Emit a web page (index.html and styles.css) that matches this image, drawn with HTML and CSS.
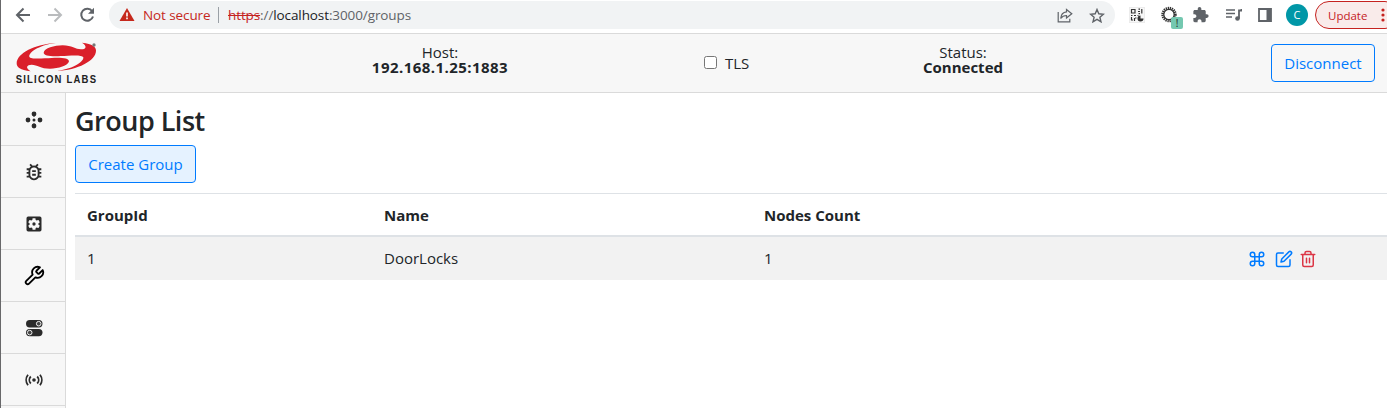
FILE: index.html
```html
<!DOCTYPE html>
<html lang="en">
<head>
<meta charset="utf-8">
<title>Group List</title>
<link rel="stylesheet" href="styles.css">
</head>
<body>
<div class="window">
  <div class="toolbar">
    <svg class="nav-icon back" width="16" height="16" viewBox="0 0 16 16"><path d="M15 8H2.500M8.500 1.500 2 8l6.500 6.500" fill="none" stroke="#5f6368" stroke-width="2"/></svg>
    <svg class="nav-icon forward" width="16" height="16" viewBox="0 0 16 16"><path d="M1 8h12.500M7.500 1.500 14 8l-6.500 6.500" fill="none" stroke="#babcbe" stroke-width="2"/></svg>
    <svg class="nav-icon reload" width="16" height="16" viewBox="0 0 16 16"><path d="M13.200 4.300A6 6 0 1 0 14 9.500" fill="none" stroke="#5f6368" stroke-width="2"/><path d="M15 .8v6H9z" fill="#5f6368"/></svg>
    <div class="address">
      <svg class="warn" width="16" height="14" viewBox="0 0 16 14"><path d="M8 0l7.500 13H.5z" fill="#c5281c"/><path d="M8 4.500v4M8 9.500v1.700" stroke="#fff" stroke-width="1.600"/></svg>
      <span class="insecure">Not secure</span>
      <span class="divider"></span>
      <span class="url"><s>https</s>://<b>localhost</b>:3000/groups</span>
      <svg class="share" width="16" height="15" viewBox="0 0 16 15" fill="none" stroke="#5f6368" stroke-width="1.200"><path d="M1.200 4v9.800h11.600v-3"/><path d="M9.500 1.500 14.800 5.700 9.500 10V7.500C6.500 7.500 5 8.500 3.700 10.500 4 7 6 4.200 9.500 3.900z"/></svg>
      <svg class="star" width="16" height="15" viewBox="0 0 16 15"><path d="M8 1.500l1.800 4.300 4.700.4-3.600 3.100 1.100 4.500L8 11.400l-4 2.400 1.100-4.500L1.500 6.200l4.700-.4z" fill="none" stroke="#5f6368" stroke-width="1.400"/></svg>
    </div>
    <svg class="ext qr" width="16" height="16" viewBox="0 0 16 16"><path d="M.3.300h15.400v15.400H.3z" fill="#f7f7f7" stroke="#ddd" stroke-width=".6"/><g fill="none" stroke="#333" stroke-width="1.200"><path d="M2.500 2.500h3.500v3.500h-3.500zM9.500 2.200h1.500M12.800 2v4.500M9 4.500h2M9.500 6.700h1.500M2 8.500h1.500M5 8.500h2M2.500 10v3.500M2 13h2M5.500 11v3M6 11h1.500M8.500 8.500h1"/></g><path d="M11.500 8.500v3H14.500A3 3 0 1 1 11.500 8.500z" fill="#333"/></svg>
    <div class="ext gear-ext">
      <svg width="18" height="18" viewBox="0 0 18 18"><circle cx="8" cy="8.500" r="6.300" fill="none" stroke="#333" stroke-width="2.800" stroke-dasharray="1.250 .73"/><circle cx="8" cy="8.500" r="5.200" fill="none" stroke="#333" stroke-width="1.200"/></svg>
      <span class="badge">!</span>
    </div>
    <svg class="ext puzzle" width="16" height="16" viewBox="0 0 22 22"><path d="M19 10h-1.500V6c0-1.100-.9-2-2-2h-4V2.500a2.500 2.500 0 0 0-5 0V4h-4c-1.100 0-2 .9-2 2v3.800H2c1.500 0 2.700 1.200 2.700 2.700S3.500 15.200 2 15.200H.5V19c0 1.100.9 2 2 2h3.800v-1.500c0-1.500 1.200-2.700 2.700-2.700s2.700 1.200 2.700 2.700V21h3.800c1.100 0 2-.9 2-2v-4H19a2.500 2.500 0 0 0 0-5z" fill="#5f6368"/></svg>
    <svg class="ext music" width="17" height="14" viewBox="0 0 17 14"><path d="M1 2h9M1 5.500h9M1 9h6" stroke="#5f6368" stroke-width="1.600"/><path d="M16.500 1v1.500H14v8" fill="none" stroke="#5f6368" stroke-width="1.800"/><circle cx="12.500" cy="10.500" r="2.300" fill="#5f6368"/></svg>
    <svg class="ext panel" width="14" height="14" viewBox="0 0 14 14"><path d="M1 1h12v12H1z" fill="none" stroke="#5f6368" stroke-width="1.800"/><path d="M8.500 1H13v12H8.500z" fill="#5f6368"/></svg>
    <span class="avatar">C</span>
    <span class="update">Update<svg width="4" height="14" viewBox="0 0 4 14" fill="#c5221f"><circle cx="2" cy="2" r="1.600"/><circle cx="2" cy="7" r="1.600"/><circle cx="2" cy="12" r="1.600"/></svg></span>
  </div>

  <header class="header">
    <svg class="logo" width="84" height="43" viewBox="45 21 252 129">
      <g fill="#da1f2a">
        <path id="swoosh" d="M168 24C112 31 86 54 88 65C91 74 130 70 155 69C185 67 207 70 207 79C205 92 175 101 150 101C122 101 112 89 95 89C80 89 75 98 92 109C60 105 50 97 50 85C50 55 105 27 168 24z"/>
        <use href="#swoosh" transform="rotate(180 169 66)"/>
      </g>
      <circle cx="282" cy="30" r="5" fill="#777"/>
      <text class="logo-text" transform="translate(47 145) scale(.84 1)" textLength="287" lengthAdjust="spacing">SILICON LABS</text>
    </svg>
    <div class="stat host"><span class="label">Host:</span><strong class="host-value">192.168.1.25:1883</strong></div>
    <label class="tls"><input type="checkbox" class="check"><span>TLS</span></label>
    <div class="stat status"><span class="label">Status:</span><strong class="status-value">Connected</strong></div>
    <button class="btn disconnect">Disconnect</button>
  </header>

  <div class="body">
    <nav class="sidebar">
      <a class="side-item first"><svg width="18" height="18" viewBox="0 0 18 18" fill="#2b2b2b"><circle cx="9" cy="3" r="2.400"/><circle cx="9" cy="15" r="2.400"/><circle cx="3" cy="9" r="2.400"/><circle cx="15" cy="9" r="2.400"/><circle cx="9" cy="9" r="1.500"/><path d="M9 4v2M9 12v2" stroke="#2b2b2b" stroke-width=".8"/></svg></a>
      <a class="side-item"><svg width="22" height="22" viewBox="0 0 24 24" fill="#2b2b2b"><path d="M20 8h-2.810a5.985 5.985 0 0 0-1.820-1.960L17 4.410 15.590 3l-2.170 2.170a6.002 6.002 0 0 0-2.830 0L8.410 3 7 4.410l1.620 1.630C7.880 6.550 7.260 7.220 6.810 8H4v2h2.090c-.05.330-.09.660-.09 1v1H4v2h2v1c0 .340.040.670.090 1H4v2h2.810c1.040 1.790 2.970 3 5.190 3s4.150-1.210 5.190-3H20v-2h-2.090c.05-.330.090-.660.090-1v-1h2v-2h-2v-1c0-.340-.040-.670-.090-1H20V8zm-4 4v3c0 .220-.030.470-.070.700l-.1.650-.370.650c-.720 1.240-2.040 2-3.460 2s-2.740-.770-3.460-2l-.370-.640-.1-.650A4.370 4.370 0 0 1 8 15v-4c0-.230.030-.480.070-.700l.1-.650.370-.650c.3-.520.720-.970 1.210-1.310l.570-.390.740-.180a3.900 3.900 0 0 1 1.890 0l.680.160.610.420c.5.340.910.780 1.210 1.310l.380.650.1.650c.040.220.070.470.070.690v1zm-6 2h4v2h-4v-2zm0-4h4v2h-4v-2z"/></svg></a>
      <a class="side-item"><svg width="20" height="20" viewBox="0 0 24 24" fill="#2b2b2b"><path d="M12 10a2 2 0 1 0 0 4 2 2 0 0 0 0-4zm7-7H5a2 2 0 0 0-2 2v14a2 2 0 0 0 2 2h14a2 2 0 0 0 2-2V5a2 2 0 0 0-2-2zm-1.750 9c0 .230-.020.460-.050.680l1.480 1.160c.130.110.170.300.080.450l-1.400 2.420c-.090.150-.270.210-.430.150l-1.740-.700c-.360.280-.760.510-1.180.690l-.260 1.850c-.030.170-.180.300-.350.300h-2.800c-.170 0-.320-.130-.350-.290l-.260-1.850c-.430-.180-.820-.410-1.180-.690l-1.740.700c-.160.060-.340 0-.430-.150l-1.400-2.420a.350.350 0 0 1 .080-.450l1.480-1.160a5.560 5.560 0 0 1 0-1.370l-1.480-1.160a.350.350 0 0 1-.080-.450l1.400-2.420c.090-.150.270-.210.430-.150l1.740.700c.360-.280.760-.510 1.180-.690l.260-1.850c.030-.170.180-.300.350-.300h2.800c.170 0 .320.130.350.290l.260 1.850c.430.180.820.410 1.180.690l1.740-.700c.160-.060.340 0 .430.150l1.400 2.420c.090.150.050.340-.080.450l-1.480 1.160c.030.230.050.460.050.690z"/></svg></a>
      <a class="side-item"><svg width="22" height="22" viewBox="0 0 24 24" fill="none" stroke="#000" stroke-width="2" stroke-linecap="round" stroke-linejoin="round"><path d="M14.700 6.300a1 1 0 0 0 0 1.400l1.600 1.600a1 1 0 0 0 1.400 0l3.770-3.770a6 6 0 0 1-7.940 7.940l-6.910 6.910a2.120 2.120 0 0 1-3-3l6.910-6.910a6 6 0 0 1 7.940-7.940l-3.760 3.760z"/></svg></a>
      <a class="side-item"><svg width="18" height="18" viewBox="0 0 18 18"><rect x="1" y="1" width="16.500" height="7.400" rx="3.700" fill="#2b2b2b"/><rect x="1" y="9.900" width="16.500" height="7.400" rx="3.700" fill="#2b2b2b"/><g fill="#444" stroke="#eee" stroke-width="1"><circle cx="13.700" cy="4.700" r="2.300"/><circle cx="4.700" cy="13.600" r="2.300"/></g></svg></a>
      <a class="side-item"><svg width="18" height="14" viewBox="0 0 18 14" fill="none" stroke="#2b2b2b" stroke-width="1.800"><circle cx="9" cy="7" r="1.800" fill="#2b2b2b" stroke="none"/><path d="M5.800 3.500a5 5 0 0 0 0 7M12.200 3.500a5 5 0 0 1 0 7M3 1.700C.6 4.800.6 9.200 3 12.300M15 1.700c2.400 3.100 2.400 7.500 0 10.600"/></svg></a>
    </nav>
    <main class="content">
      <h1 class="title"><span>Group List</span></h1>
      <button class="btn create">Create Group</button>
      <table class="groups">
        <thead><tr><th class="c-id">GroupId</th><th class="c-name">Name</th><th class="c-count">Nodes Count</th><th></th></tr></thead>
        <tbody><tr>
          <td>1</td><td>DoorLocks</td><td>1</td>
          <td class="c-actions"><div class="actions">
            <svg class="command" width="18" height="18" viewBox="0 0 24 24"><path d="M18 3a3 3 0 0 0-3 3v12a3 3 0 1 0 3-3H6a3 3 0 1 0 3 3V6a3 3 0 1 0-3 3h12a3 3 0 0 0 0-6z"/></svg>
            <svg class="edit" width="18" height="18" viewBox="0 0 24 24"><path d="M11 4H4a2 2 0 0 0-2 2v14a2 2 0 0 0 2 2h14a2 2 0 0 0 2-2v-7"/><path d="M18.500 2.500a2.121 2.121 0 0 1 3 3L12 15l-4 1 1-4 9.500-9.500z"/></svg>
            <svg class="trash" width="18" height="18" viewBox="0 0 24 24"><path d="M3 6h18M19 6v14a2 2 0 0 1-2 2H7a2 2 0 0 1-2-2V6M8 6V4a2 2 0 0 1 2-2h4a2 2 0 0 1 2 2v2M10 11v6M14 11v6"/></svg>
          </div></td>
        </tr></tbody>
      </table>
    </main>
  </div>
</div>
</body>
</html>
```
FILE: styles.css
```css
* { box-sizing: border-box; }
body { margin: 0; background: #fff; color: #212529; font-family: "Open Sans", "Noto Sans", sans-serif; font-size: 15px; }
svg { display: block; flex: none; }
.window { width: 1387px; height: 408px; overflow: hidden; border-left: 1px solid #68686a; display: flex; flex-direction: column; }

.toolbar { height: 33px; flex: none; display: flex; align-items: center; padding: 0 0 3px 14px; }
.nav-icon { margin-right: 16px; }
.reload { margin-right: 14px; }
.address { width: 1006px; flex: none; height: 28px; margin-right: 14px; border-radius: 14px; background: #f1f3f4; display: flex; align-items: center; font-size: 13.500px; padding-left: 10px; }
.warn { margin-right: 8px; }
.insecure { width: 75px; color: #c5281c; white-space: nowrap; letter-spacing: -0.1px; }
.divider { width: 1px; height: 16px; background: #9aa0a6; margin-right: 9px; }
.url { color: #5f6368; flex: 1; white-space: nowrap; letter-spacing: -0.1px; }
.url s { color: #c5221f; }
.url b { color: #202124; font-weight: 400; }
.share { margin-right: 16px; }
.star { margin-right: 10px; }
.ext { flex: none; }
.qr { margin-right: 16px; }
.gear-ext { position: relative; width: 18px; height: 18px; margin-right: 14px; }
.badge { position: absolute; left: 10px; top: 11px; width: 12px; height: 12px; border-radius: 2px; background: #74c8b0; color: #222; font-size: 10px; line-height: 12px; text-align: center; }
.puzzle { margin-right: 16px; }
.music { margin-right: 16px; }
.panel { margin-right: 14px; }
.avatar { width: 22px; height: 22px; border-radius: 50%; background: #0097a7; color: #fff; font-size: 11px; line-height: 22px; text-align: center; flex: none; margin-right: 7px; }
.update { width: 84px; height: 28px; flex: none; border: 1px solid #c5221f; border-radius: 14px; background: #f9ebea; color: #c5221f; font-size: 11.500px; display: flex; align-items: center; padding-left: 12px; }
.update svg { margin-left: 14px; }

.header { height: 60px; flex: none; background: #f7f7f7; border-top: 1px solid #dadada; border-bottom: 1px solid #dadada; display: flex; align-items: center; padding: 0 12px 0 14px; }
.logo-text { font: 700 34px "Liberation Sans", sans-serif; fill: #222; }
.stat { display: flex; flex-direction: column; align-items: center; line-height: 15px; padding-bottom: 6px; white-space: nowrap; }
.host { width: 160px; margin-left: 261px; }
.host-value { letter-spacing: 0.45px; }
.tls { display: flex; align-items: center; width: 100px; margin-left: 184px; }
.check { width: 13px; height: 13px; margin: 0 8px 2px 0; }
.status { width: 120px; margin-left: 99px; }
.btn { height: 38px; border: 1px solid #007bff; border-radius: 4px; color: #007bff; background: transparent; font: inherit; padding: 0; white-space: nowrap; }
.disconnect { width: 104px; margin-left: auto; }

.body { flex: 1; display: flex; min-height: 0; }
.sidebar { width: 65px; flex: none; background: #f7f7f7; border-right: 1px solid #dadada; }
.side-item { height: 52px; border-bottom: 1px solid #dadada; display: flex; align-items: center; justify-content: center; padding-left: 2px; }
.first { height: 53px; padding-top: 2px; }
.content { flex: 1; padding: 11px 0 0 9px; }
.title { margin: 0 0 7px; font-size: 27px; font-weight: 600; letter-spacing: -0.5px; line-height: 34px; }
.create { width: 121px; background: #e5f2ff; display: block; }
.groups { width: 1312px; margin-top: 10px; border-collapse: separate; border-spacing: 0; table-layout: fixed; }
.groups th, .groups td { text-align: left; padding: 0 12px; }
.groups th { height: 44px; border-top: 1px solid #dee2e6; border-bottom: 2px solid #dee2e6; font-weight: 700; }
.groups td { height: 43px; background: #f2f2f2; padding-bottom: 2px; }
.groups td.c-actions { padding-bottom: 0; }
.c-id { width: 297px; }
.c-name { width: 380px; }
.c-count { width: 484px; }
.actions { display: flex; fill: none; stroke: #007bff; stroke-width: 2; stroke-linecap: round; stroke-linejoin: round; }
.command { margin-right: 9px; }
.edit { margin-right: 6px; }
.trash { stroke: #dc3545; }
```
